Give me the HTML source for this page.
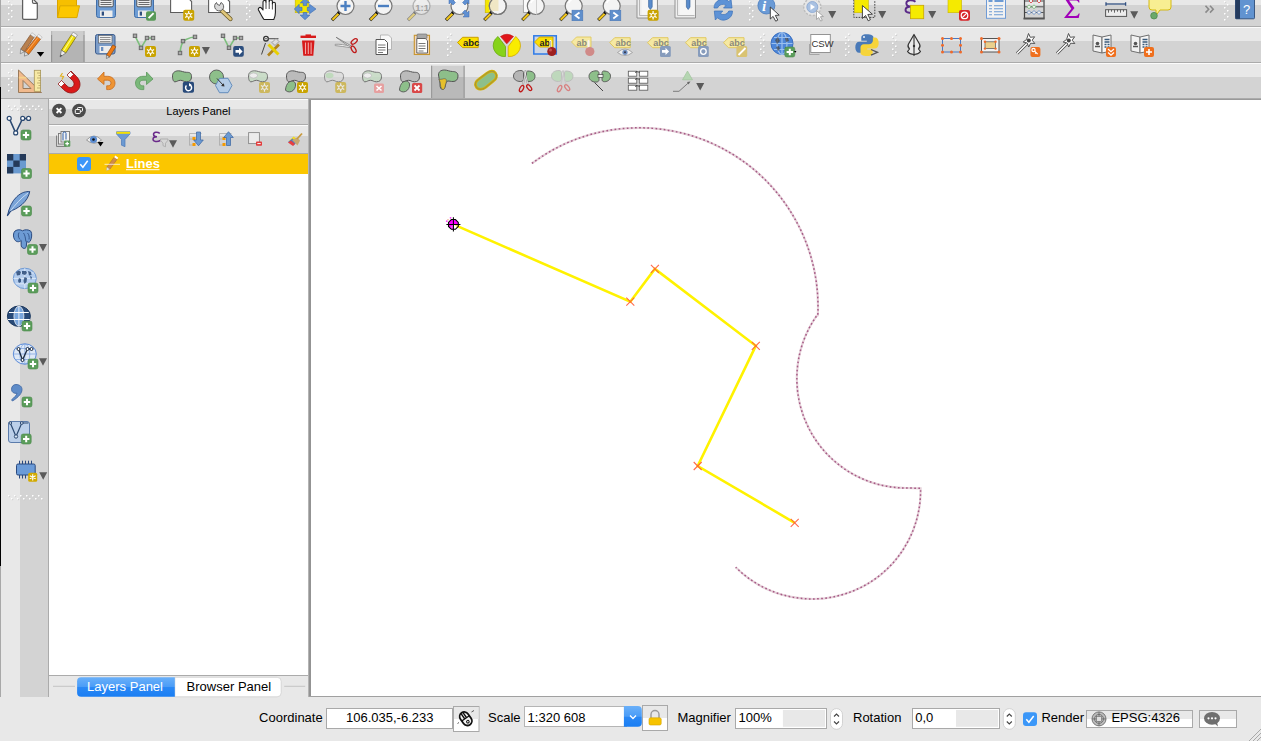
<!DOCTYPE html>
<html><head><meta charset="utf-8">
<style>
*{margin:0;padding:0;box-sizing:border-box}
html,body{width:1261px;height:741px;overflow:hidden;background:#e8e8e8;font-family:"Liberation Sans",sans-serif;position:relative}
.a{position:absolute}
svg{position:absolute;overflow:visible}
.t{position:absolute;white-space:nowrap;color:#000}
</style></head><body>
<!-- toolbar backgrounds -->
<div class="a" style="left:0;top:0;width:1261px;height:5px;background:#e8e8e8"></div>
<div class="a" style="left:0;top:5px;width:1261px;height:21px;background:#d3d3d3"></div>
<div class="a" style="left:0;top:26px;width:1261px;height:1px;background:#ababab"></div>
<div class="a" style="left:0;top:27px;width:1261px;height:1px;background:#fbfbfb"></div>
<div class="a" style="left:0;top:28px;width:1261px;height:13px;background:#e8e8e8"></div>
<div class="a" style="left:0;top:41px;width:1261px;height:21px;background:#d3d3d3"></div>
<div class="a" style="left:0;top:62px;width:1261px;height:1px;background:#ababab"></div>
<div class="a" style="left:0;top:63px;width:1261px;height:1px;background:#fbfbfb"></div>
<div class="a" style="left:0;top:64px;width:1261px;height:13px;background:#e8e8e8"></div>
<div class="a" style="left:0;top:77px;width:1261px;height:21px;background:#d3d3d3"></div>
<div class="a" style="left:0;top:98px;width:1261px;height:1px;background:#ababab"></div>
<!-- left vertical toolbar -->
<div class="a" style="left:1px;top:99px;width:19px;height:598px;background:#e8e8e8"></div>
<div class="a" style="left:20px;top:99px;width:28px;height:598px;background:#d3d3d3"></div>
<div class="a" style="left:48px;top:99px;width:1px;height:598px;background:#ababab"></div>
<div class="a" style="left:0;top:0;width:1px;height:741px;background:#a8a8a8"></div>
<div class="a" style="left:0;top:87px;width:1px;height:479px;background:#000"></div>
<!-- layers panel -->
<div class="a" style="left:49px;top:99px;width:259px;height:1px;background:#fbfbfb"></div>
<div class="a" style="left:49px;top:100px;width:259px;height:9px;background:#e8e8e8"></div>
<div class="a" style="left:49px;top:109px;width:259px;height:15px;background:#d3d3d3"></div>
<div class="a" style="left:49px;top:124px;width:259px;height:1px;background:#ababab"></div>
<div class="a" style="left:49px;top:125px;width:259px;height:1px;background:#fbfbfb"></div>
<div class="a" style="left:49px;top:126px;width:259px;height:10px;background:#e8e8e8"></div>
<div class="a" style="left:49px;top:136px;width:259px;height:17px;background:#d3d3d3"></div>
<div class="a" style="left:49px;top:153px;width:259px;height:1px;background:#ababab"></div>
<div class="a" style="left:49px;top:154px;width:259px;height:521px;background:#fff"></div>
<div class="a" style="left:49px;top:154px;width:259px;height:20px;background:#fbc600"></div>
<div class="a" style="left:49px;top:675px;width:259px;height:1px;background:#ababab"></div>
<div class="a" style="left:308px;top:99px;width:1px;height:598px;background:#b4b4b4"></div><div class="a" style="left:309px;top:99px;width:2px;height:598px;background:#939393"></div>
<!-- map canvas -->
<div class="a" style="left:311px;top:100px;width:950px;height:597px;background:#fff"></div>
<div class="a" style="left:309px;top:99px;width:952px;height:1px;background:#999"></div>
<!-- status bar -->
<div class="a" style="left:0;top:697px;width:1261px;height:44px;background:#e8e8e8"></div>
<div class="a" style="left:309px;top:696px;width:952px;height:1px;background:#a0a0a0"></div>
<!--TEXT-->
<svg style="left:0;top:0" width="1261" height="741" viewBox="0 0 1261 741">
<defs><g id="by"><rect x="0" y="0" width="11" height="11" rx="2" fill="#c9a300"/><path d="M5.5 1.3v8.4M1.9 3.4l7.2 4.2M1.9 7.6l7.2-4.2" stroke="#fff" stroke-width="1.2"/><circle cx="5.5" cy="5.5" r="2" fill="#d4ae20" stroke="#fff" stroke-width="1"/><circle cx="5.5" cy="5.5" r="0.7" fill="#b89000"/></g>
<g id="byf" opacity="0.55"><use href="#by"/></g>
<g id="bg"><rect x="0" y="0" width="10" height="10" rx="2" fill="#5b9d5b" stroke="#4a8a4a" stroke-width="0.6"/><path d="M5 1.8v6.4M1.8 5h6.4" stroke="#fff" stroke-width="2"/></g>
<g id="bx"><rect x="0" y="0" width="10" height="11" rx="2" fill="#d9474a"/><path d="M2.5 3l5 5M7.5 3l-5 5" stroke="#fff" stroke-width="1.8"/></g>
<path id="dd" d="M0 0h8l-4 7.5z" fill="#5a5a5a"/>
<g id="hv"><g fill="#bdbdbd"><rect x="4.5" y="1" width="1.6" height="1.6"/><rect x="1.5" y="4" width="1.6" height="1.6"/><rect x="4.5" y="7" width="1.6" height="1.6"/><rect x="1.5" y="10" width="1.6" height="1.6"/><rect x="4.5" y="13" width="1.6" height="1.6"/><rect x="1.5" y="16" width="1.6" height="1.6"/><rect x="4.5" y="19" width="1.6" height="1.6"/><rect x="1.5" y="22" width="1.6" height="1.6"/></g><g fill="#fff"><rect x="4" y="0.5" width="1.6" height="1.6"/><rect x="1" y="3.5" width="1.6" height="1.6"/><rect x="4" y="6.5" width="1.6" height="1.6"/><rect x="1" y="9.5" width="1.6" height="1.6"/><rect x="4" y="12.5" width="1.6" height="1.6"/><rect x="1" y="15.5" width="1.6" height="1.6"/><rect x="4" y="18.5" width="1.6" height="1.6"/><rect x="1" y="21.5" width="1.6" height="1.6"/></g></g>
<g id="hh"><g fill="#bdbdbd"><rect x="1" y="1.5" width="1.6" height="1.6"/><rect x="4" y="4.5" width="1.6" height="1.6"/><rect x="7" y="1.5" width="1.6" height="1.6"/><rect x="10" y="4.5" width="1.6" height="1.6"/><rect x="13" y="1.5" width="1.6" height="1.6"/><rect x="16" y="4.5" width="1.6" height="1.6"/><rect x="19" y="1.5" width="1.6" height="1.6"/><rect x="22" y="4.5" width="1.6" height="1.6"/><rect x="25" y="1.5" width="1.6" height="1.6"/><rect x="28" y="4.5" width="1.6" height="1.6"/><rect x="31" y="1.5" width="1.6" height="1.6"/><rect x="34" y="4.5" width="1.6" height="1.6"/></g><g fill="#fff"><rect x="0.5" y="1" width="1.6" height="1.6"/><rect x="3.5" y="4" width="1.6" height="1.6"/><rect x="6.5" y="1" width="1.6" height="1.6"/><rect x="9.5" y="4" width="1.6" height="1.6"/><rect x="12.5" y="1" width="1.6" height="1.6"/><rect x="15.5" y="4" width="1.6" height="1.6"/><rect x="18.5" y="1" width="1.6" height="1.6"/><rect x="21.5" y="4" width="1.6" height="1.6"/><rect x="24.5" y="1" width="1.6" height="1.6"/><rect x="27.5" y="4" width="1.6" height="1.6"/><rect x="30.5" y="1" width="1.6" height="1.6"/><rect x="33.5" y="4" width="1.6" height="1.6"/></g></g>
<g id="nd"><rect x="-1.7" y="-1.7" width="3.4" height="3.4" fill="#a9a9a9" stroke="#6a6a6a" stroke-width="1"/></g>
<g id="mag"><path d="M-13.5 14.2L-6.5 7.2" stroke="#222" stroke-width="3.3" stroke-linecap="butt"/><path d="M-13 13.7L-7 7.7" stroke="#f0c419" stroke-width="2.3"/><circle cx="-6.3" cy="6.3" r="1.7" fill="#111"/><circle cx="0" cy="0" r="8.5" fill="#f4f4f4" stroke="#777" stroke-width="1.2"/><path d="M-5 -3a6 6 0 0 1 6-4" stroke="#fff" stroke-width="1.5" fill="none"/></g>
<g id="tag"><path d="M0.5 5.5l5-5h15.5v10h-15.5z" fill="#fbe54a" stroke="#d5ad00" stroke-width="1"/><text x="6.5" y="9.3" font-family="Liberation Sans" font-weight="bold" font-size="9" fill="#333">abc</text></g>
<g id="book"><path d="M0.5 1.5l9 2v16l-9-2z" fill="#f2f2f2" stroke="#6f6f6f" stroke-width="1"/><path d="M9.5 3.5l9-2v16l-9 2z" fill="#f7f7f7" stroke="#6f6f6f" stroke-width="1"/><path d="M12 6h5M12 8.5h5M12 11h2M15 11h2M12 13.5h2M15 13.5h2" stroke="#3a5a7a" stroke-width="1.3"/><circle cx="5" cy="10" r="1.8" fill="#555"/><path d="M2.5 13h5" stroke="#555" stroke-width="1.5"/></g>

<g id="bo"><rect x="0" y="0" width="10" height="10" rx="2" fill="#ef6f1d"/></g>
<g id="blob"><path d="M1 5.5c0-3.5 3-5 6-5 3 0 5 1.5 8 1.5 3 0 5 .5 5 4.5 0 3.5-2 5-5 5-3 0-3.5-1.5-6-1.5-2.5 0-3.5 1.5-5.5 1.5-1.5 0-2.5-2-2.5-6z" stroke="#555" stroke-width="1"/></g>
<g id="tagf"><path d="M0.5 5.5l5-5h15.5v10h-15.5z" fill="#f6e9a2" stroke="#e0c860" stroke-width="1"/><text x="6.3" y="9.3" font-family="Liberation Sans" font-weight="bold" font-size="9" fill="#8a8a7a">abc</text></g>
</defs>
<clipPath id="c1"><rect x="0" y="0" width="1261" height="26"/></clipPath>
<g clip-path="url(#c1)">
<use href="#hv" x="7" y="-2.5"/><use href="#hv" x="245" y="-2.5"/><use href="#hv" x="748" y="-2.5"/><use href="#hv" x="1223" y="-2.5"/>
<!-- new -->
<path d="M22.6 -4V18a1.3 1.3 0 0 0 1.3 1.3H36a1.3 1.3 0 0 0 1.3-1.3V3.3L32.5 -1.5V-4Z" fill="#fff" stroke="#5e5e5e" stroke-width="1.25"/>
<path d="M32.5 -1.5V2a1.3 1.3 0 0 0 1.3 1.3H37.3" fill="none" stroke="#5e5e5e" stroke-width="1.2"/>
<!-- open -->
<path d="M57.5 -2.5h6l1.5 2h11.5v17.8h-19z" fill="#f6bf00" stroke="#dba400" stroke-width="1"/>
<path d="M60 5.8h19.5l-2.6 11.8h-19.3z" fill="#fcc700" stroke="#dba800" stroke-width="1"/>
<!-- save -->
<g id="flop"><rect x="96.5" y="-4" width="19" height="21.5" rx="2" fill="#6d9cd4" stroke="#416fa9" stroke-width="1"/>
<rect x="98.8" y="-4" width="14.4" height="10.8" rx="1.2" fill="#efefef" stroke="#4a4a4a" stroke-width="0.9"/>
<path d="M100.5 0.5h11M100.5 2.5h11M100.5 4.5h11" stroke="#4a4a4a" stroke-width="0.8"/>
<rect x="100" y="10.5" width="12.5" height="6.5" fill="#ececec"/>
<rect x="101.7" y="11.6" width="2.3" height="4" fill="#2e4e7e"/></g>
<use href="#flop" x="38" y="0"/>
<rect x="146" y="11.2" width="10" height="9.5" rx="2" fill="#589a58"/><path d="M148.6 18.2l5-5" stroke="#fff" stroke-width="1.8"/>
<!-- print composer -->
<path d="M170.6 -4h15.5l5.5 5.5v11h-21z" fill="#fff" stroke="#5c5c5c" stroke-width="1.1"/>
<use href="#by" x="183.2" y="9.8"/>
<!-- composer manager -->
<path d="M208.6 -4h15.5l5.5 5.5v11h-21z" fill="#fff" stroke="#5c5c5c" stroke-width="1.1"/>
<path d="M221.5 10.5l9 8.5" stroke="#6b5a2a" stroke-width="4.2" stroke-linecap="round"/><path d="M221.5 10.5l9 8.5" stroke="#e0c77a" stroke-width="2.6" stroke-linecap="round"/>
<path d="M216.5 2.5a4.5 4.5 0 0 0 5.5 7.5l1-1a4.5 4.5 0 0 0-2-6.5l-1.5 3-2.5-1.5z" fill="#d8d8d8" stroke="#555" stroke-width="0.9"/>
<!-- pan -->
<path d="M264 19.5C262 17 259.8 12.5 258.5 10C257.8 8.3 259.6 6.6 261.2 7.8L263 10V2a1.5 1.5 0 0 1 3 0V0.5a1.6 1.6 0 0 1 3.2 0V1.5a1.6 1.6 0 0 1 3.2 0V3.8a1.5 1.5 0 0 1 3 0V12.5C275.4 15.5 274.8 17.5 273.8 19.5Z" fill="#fff" stroke="#1e1e1e" stroke-width="1.1" stroke-linejoin="round"/>
<path d="M266 2v7M269.2 1.5v7.5M272.4 3.5v6" stroke="#1e1e1e" stroke-width="0.8"/>
<!-- pan to selection -->
<rect x="295.2" y="-2" width="13.3" height="14.7" fill="#f3e600" stroke="#c6b200" stroke-width="0.6"/>
<g fill="#5f90d2" stroke="#3d6bb0" stroke-width="0.6" stroke-linejoin="round">
<path d="M294.3 9L299.2 4.3V7.3H302V10.8H299.2V13.7Z"/><path d="M316 9L309.6 4.3V7.3H307.3V10.8H309.6V13.7Z"/><path d="M305 -1.6L300.3 2.9H303.2V5.6H306.8V2.9H309.7Z"/><path d="M305 19.7L300.1 15.1H303.2V12.5H306.8V15.1H309.9Z"/>
</g>
<!-- zoom in/out/1:1/full -->
<use href="#mag" x="345.5" y="6"/><path d="M340.5 6h10M345.5 1v10" stroke="#4b7fc1" stroke-width="2.4"/>
<use href="#mag" x="383.5" y="6"/><path d="M378 6h11" stroke="#4b7fc1" stroke-width="2.4"/>
<g opacity="0.45"><use href="#mag" x="421.5" y="6"/></g><text x="415.2" y="10.5" font-family="Liberation Sans" font-weight="bold" font-size="9.5" fill="#a0a0a0">1:1</text>
<use href="#mag" x="459.5" y="6"/>
<g fill="#5f90d2" stroke="#3d6bb0" stroke-width="0.5"><path d="M449 -2l6 0-2 2 2.5 2.5-2.5 2.5-2.5-2.5-1.5 1.5z"/><path d="M469 -2h-6l2 2-2.5 2.5 2.5 2.5 2.5-2.5 1.5 1.5z"/><path d="M469 17h-6l2-2-2.5-2.5 2.5-2.5 2.5 2.5 1.5-1.5z"/></g>
<!-- zoom to layer -->
<rect x="485.2" y="-2" width="6" height="14.7" fill="#f5e600" stroke="#c8b400" stroke-width="0.6"/>
<use href="#mag" x="497.8" y="6"/><path d="M489.3 -2v15.5" stroke="#fff0" /><rect x="489.5" y="-2" width="9" height="13" fill="#efe6c0" opacity="0.9"/><circle cx="497.8" cy="6" r="8.5" fill="none" stroke="#777" stroke-width="1.2"/>
<!-- zoom to selection -->
<rect x="523.3" y="-3" width="11" height="15.5" fill="#fafafa" stroke="#888" stroke-width="0.7"/>
<use href="#mag" x="535.8" y="6"/><path d="M536.5 -2.5v17" stroke="#d0d0d0" stroke-width="1"/>
<!-- zoom last/next -->
<use href="#mag" x="573.7" y="6"/><rect x="572" y="10.2" width="10.8" height="10.5" fill="#5f8fcc" stroke="#4a78b8" stroke-width="0.6"/><path d="M579.5 12.5l-4 3 4 3" stroke="#fff" stroke-width="1.8" fill="none"/>
<use href="#mag" x="611.7" y="6"/><rect x="610" y="10.2" width="10.8" height="10.5" fill="#5f8fcc" stroke="#4a78b8" stroke-width="0.6"/><path d="M613.3 12.5l4 3-4 3" stroke="#fff" stroke-width="1.8" fill="none"/>
<!-- bookmarks -->
<path d="M637 -3h20.5v21h-20.5z" fill="#ededed" stroke="#8a8a8a" stroke-width="0.9"/><path d="M639.5 -3v18.5h17" fill="none" stroke="#b8b8b8" stroke-width="1"/><rect x="641.5" y="-3" width="15" height="18" fill="#f6f6f6"/>
<path d="M648.6 -3h3.6v10l-1.8 2.5-1.8-2.5z" fill="#5a8ccc" stroke="#2e5a94" stroke-width="0.6"/>
<use href="#by" x="647.6" y="9.8"/>
<path d="M675 -3h20.5v21h-20.5z" fill="#ededed" stroke="#8a8a8a" stroke-width="0.9"/><path d="M677.5 -3v18.5h17" fill="none" stroke="#b8b8b8" stroke-width="1"/><rect x="679.5" y="-3" width="15" height="18" fill="#f6f6f6"/>
<path d="M686.4 -3h3.6v10l-1.8 2.5-1.8-2.5z" fill="#5a8ccc" stroke="#2e5a94" stroke-width="0.6"/>
<!-- refresh -->
<path d="M714 8a9 9 0 0 1 15-6.5l2-2.5 1 9h-8.5l2.5-2.5a5.5 5.5 0 0 0-8.5 2.5z" fill="#5d92d6" stroke="#3a70b8" stroke-width="0.7"/>
<path d="M732.5 11a9 9 0 0 1-15 6.8l-2.2 2.2-1-9h8.5l-2.5 2.5a5.5 5.5 0 0 0 8.5-2.5z" fill="#5d92d6" stroke="#3a70b8" stroke-width="0.7"/>
<!-- identify -->
<circle cx="766.4" cy="5.5" r="8.5" fill="#6b9bd6" stroke="#4a7cbf" stroke-width="0.8"/><text x="762" y="11" font-family="Liberation Serif" font-style="italic" font-weight="bold" font-size="15" fill="#fff">i</text>
<path d="M770.3 7v12l2.8-2.6 2.6 4.8 2.1-1.1-2.5-4.7 3.9-.3z" fill="#fff" stroke="#333" stroke-width="0.9" stroke-linejoin="round"/>
<!-- action -->
<circle cx="812.3" cy="7" r="8.6" fill="#e6e6e6" stroke="#bdbdbd" stroke-width="1.5" stroke-dasharray="2.2 1.4"/>
<circle cx="812.3" cy="7" r="5.5" fill="#a9c1e2" stroke="#86a5d0" stroke-width="0.8"/><path d="M810.5 4v6l4.5-3z" fill="#fff"/>
<path d="M816.5 10.5v9l2.2-2 2 3.6 1.6-.8-1.9-3.6 3-.2z" fill="#fff" stroke="#999" stroke-width="0.8" stroke-linejoin="round"/>
<use href="#dd" x="828.2" y="11"/>
<!-- select -->
<rect x="853.8" y="-3" width="21" height="20.4" fill="none" stroke="#333" stroke-width="0.9" stroke-dasharray="1.6 1.2"/>
<rect x="854.5" y="-3" width="13.8" height="15.7" fill="#f5ea00" stroke="#c9b500" stroke-width="0.6"/>
<path d="M862.4 5.5v13l3.2-3 2.6 5.3 2.2-1.1-2.6-5.2 4.6-.3z" fill="#fff" stroke="#333" stroke-width="0.9" stroke-linejoin="round"/>
<use href="#dd" x="878.2" y="11"/>
<!-- select by expression -->
<path d="M915.5 1.8C912.5 -0.6 906.3 -0.3 906.3 3.2C906.3 5.3 908.5 6.5 911.5 6.5C907.5 6.5 905.5 8 905.5 10C905.5 13.2 912 13.6 916.2 11.2" fill="none" stroke="#5a2a88" stroke-width="1.9"/>
<rect x="910.5" y="5.3" width="13.2" height="13.4" fill="#f5ea00" stroke="#c9a700" stroke-width="0.8"/>
<use href="#dd" x="928.2" y="11"/>
<!-- deselect -->
<rect x="948" y="-3" width="13.6" height="15.7" fill="#f5ea00" stroke="#c9b500" stroke-width="0.6"/>
<rect x="959" y="10" width="11" height="10.8" rx="2" fill="#d7262a"/><circle cx="964.5" cy="15.4" r="3.3" fill="none" stroke="#fff" stroke-width="1.2"/><path d="M962.2 17.7l4.6-4.6" stroke="#fff" stroke-width="1.2"/>
<!-- attribute table -->
<rect x="986.5" y="-3" width="19" height="21.3" fill="#f2f2f2" stroke="#6f9bd6" stroke-width="1"/>
<path d="M988.5 1h4M994.5 1h9" stroke="#6b9ad4" stroke-width="1.8"/>
<path d="M989 5.8h3M994 5.8h9M989 8.8h3M994 8.8h9M989 11.8h3M994 11.8h9M989 14.8h3M994 14.8h9" stroke="#6b9ad4" stroke-width="1.1"/>
<!-- abacus -->
<path d="M1024.5 -3v21M1044 -3v21" stroke="#444" stroke-width="1.2"/><rect x="1023.4" y="17.6" width="21.4" height="2" rx=".6" fill="#555"/>
<path d="M1025 1h18.5M1025 6.8h18.5M1025 12.5h18.5" stroke="#444" stroke-width="0.9"/>
<g stroke-width="0.8"><path d="M1031 -1l2 2-2 2-2-2zM1039 -1l2 2-2 2-2-2z" fill="#f0f0f0" stroke="#d43a3a"/><path d="M1029 4.8l2 2-2 2-2-2zM1034 4.8l2 2-2 2-2-2z" fill="#f0f0f0" stroke="#6bb86b"/><path d="M1029 10.5l2 2-2 2-2-2zM1034 10.5l2 2-2 2-2-2zM1039 10.5l2 2-2 2-2-2z" fill="#f0f0f0" stroke="#5a84c0"/></g>
<!-- sigma -->
<path d="M1065 -1h14l.5 3.5h-1c-.5-1.5-1.5-2-3-2h-6.5l5.5 7.5-6.5 8h7.5c1.5 0 2.5-.8 3.2-2.5h1l-1 4.5h-14.7l7.3-9.3z" fill="#a000b8"/>
<!-- measure -->
<path d="M1106 4h19.6" stroke="#314f80" stroke-width="1.3"/><path d="M1106 2.3v3.4M1125.6 2.3v3.4" stroke="#314f80" stroke-width="1.3"/>
<rect x="1105.6" y="9.7" width="21" height="6.7" fill="#ececec" stroke="#555" stroke-width="1"/>
<path d="M1108.5 9.7v3M1111.5 9.7v2M1114.5 9.7v3M1117.5 9.7v2M1120.5 9.7v3M1123.5 9.7v2" stroke="#555" stroke-width="0.9"/>
<use href="#dd" x="1130.2" y="11.2"/>
<!-- annotation -->
<path d="M1152 -3h16a3 3 0 0 1 3 3v7a3 3 0 0 1-3 3h-8l-4 5.5v-5.5h-4a3 3 0 0 1-3-3v-7a3 3 0 0 1 3-3z" fill="#f8ee92" stroke="#d2b400" stroke-width="0.9"/>
<circle cx="1154" cy="15.7" r="3.3" fill="#6aa86a" stroke="#4e8a4e" stroke-width="0.8"/>
<!-- chevrons -->
<path d="M1205.5 5.8l3.2 3.4-3.2 3.4M1210 5.8l3.2 3.4-3.2 3.4" stroke="#8a8a8a" stroke-width="1.6" fill="none"/>
<!-- help -->
<rect x="1235.5" y="-3" width="19" height="21.8" rx="1" fill="#6193d0" stroke="#2e4d78" stroke-width="0.9"/><rect x="1235.5" y="-3" width="4.5" height="21.8" fill="#243b5e"/>
<text x="1243" y="14" font-family="Liberation Sans" font-size="13" fill="#fff">?</text>
</g>

<clipPath id="c2"><rect x="0" y="28" width="1261" height="34"/></clipPath>
<g clip-path="url(#c2)">
<use href="#hv" x="7" y="33"/><use href="#hv" x="446" y="33"/><use href="#hv" x="759" y="33"/><use href="#hv" x="844" y="33"/><use href="#hv" x="891" y="33"/>
<!-- pencils -->
<g transform="translate(22.5,50.5) rotate(-56)"><rect x="0" y="-2.2" width="17.5" height="4.4" fill="#b8804e" stroke="#7a5030" stroke-width="0.6"/><path d="M0 -2.2l-4 2.2 4 2.2z" fill="#ddd" stroke="#666" stroke-width="0.5"/><rect x="17.5" y="-2.2" width="2.5" height="4.4" fill="#eee" stroke="#999" stroke-width="0.4"/></g>
<g transform="translate(26.8,53) rotate(-52)"><rect x="0" y="-2.3" width="19.5" height="4.6" fill="#ea7a16" stroke="#9a4a10" stroke-width="0.6"/><path d="M0.5 -0.8h19" stroke="#f8b070" stroke-width="0.8"/><path d="M0 -2.3l-4 2.3 4 2.3z" fill="#e6e6e6" stroke="#555" stroke-width="0.5"/><rect x="19.5" y="-2.3" width="2.5" height="4.6" fill="#f2f2f2" stroke="#999" stroke-width="0.4"/></g>
<path d="M36.8 52h7.4l-3.7 4.8z" fill="#000"/>
<!-- pressed button -->
<rect x="51" y="31" width="33.5" height="10" fill="#cdcdcd"/><rect x="51" y="41" width="33.5" height="21" fill="#b4b4b4"/>
<rect x="51" y="35" width="1.2" height="27" fill="#959595"/><rect x="83.4" y="35" width="1.2" height="27" fill="#959595"/><rect x="51" y="31" width="1.2" height="4" fill="#b8b8b8"/><rect x="83.4" y="31" width="1.2" height="4" fill="#b8b8b8"/>
<g transform="translate(63.6,51.6) rotate(-57)"><rect x="0" y="-2.6" width="18.5" height="5.2" fill="#f1e10a" stroke="#8a7a10" stroke-width="0.8"/><path d="M0.5 -0.5h18" stroke="#fffa90" stroke-width="1"/><path d="M0 -2.6l-6.5 2.6 6.5 2.6z" fill="#ececec" stroke="#666" stroke-width="0.6"/><path d="M-6.5 0l2.5-1v2z" fill="#444"/><rect x="18.5" y="-2.6" width="3" height="5.2" fill="#f5f5f5" stroke="#888" stroke-width="0.6"/></g>
<!-- save edits -->
<rect x="95.5" y="34.5" width="19.5" height="19.5" rx="2" fill="#7b9cc8" stroke="#3f5f8f" stroke-width="1"/>
<rect x="98.5" y="35.5" width="13.5" height="7.5" fill="#f0f0f0" stroke="#555" stroke-width="0.6"/><path d="M100 37.5h10.5M100 39.5h10.5M100 41.5h10.5" stroke="#666" stroke-width="0.7"/>
<rect x="99.5" y="46" width="11.5" height="7" fill="#ededed"/><rect x="101" y="47" width="2.3" height="4" fill="#6a8ec0"/>
<g transform="translate(108,56) rotate(-58)"><rect x="0" y="-1.8" width="12" height="3.6" fill="#ee7a14" stroke="#8a4a10" stroke-width="0.6"/><path d="M0 -1.8l-3 1.8 3 1.8z" fill="#ddd" stroke="#555" stroke-width="0.5"/></g>
<!-- add feature -->
<path d="M135 35.8L141 47.9L147 38L153 38" stroke="#7dbf7d" stroke-width="1.6" fill="none"/>
<use href="#nd" x="135" y="35.8"/><use href="#nd" x="147" y="38"/><use href="#nd" x="153" y="38"/><use href="#nd" x="141" y="47.9"/>
<use href="#by" x="145" y="46"/>
<!-- circular string -->
<path d="M180 53C180.5 46 182 41.5 186 39.5S192 37 195 37" stroke="#7dbf7d" stroke-width="1.6" fill="none"/>
<use href="#nd" x="180" y="53"/><use href="#nd" x="183" y="41.1"/><use href="#nd" x="195" y="36.9"/>
<use href="#by" x="189" y="46"/><use href="#dd" x="201.9" y="47"/>
<!-- move feature -->
<path d="M223 35.8L229 47.8L235 38L241 38" stroke="#7dbf7d" stroke-width="1.6" fill="none"/>
<use href="#nd" x="223" y="35.8"/><use href="#nd" x="235" y="38"/><use href="#nd" x="241" y="38"/><use href="#nd" x="229" y="47.8"/>
<rect x="233.2" y="46" width="10.6" height="10.8" rx="2" fill="#2c4e7e"/><path d="M235.5 50h3.5v-2.2l3.6 3.6-3.6 3.6v-2.2h-3.5z" fill="#fff"/>
<!-- node tool -->
<circle cx="266" cy="38.7" r="2.3" fill="#fff" stroke="#333" stroke-width="1.4"/><circle cx="266" cy="38.7" r="0.8" fill="#333"/>
<path d="M268.5 38.7h10" stroke="#555" stroke-width="1.1"/><path d="M265.5 43l-4 11.5" stroke="#333" stroke-width="0.9"/>
<path d="M268 55.5l11-11" stroke="#b0841a" stroke-width="2.6"/><path d="M268.5 44.5l10 10" stroke="#e8d000" stroke-width="3"/><path d="M272 42.5l4-4 3 3-4 4z" fill="#ddd" stroke="#777" stroke-width="0.6"/>
<!-- delete -->
<path d="M300.5 36.8h15.5" stroke="#d71a1a" stroke-width="2.4"/><path d="M305.5 35.2h5.5" stroke="#d71a1a" stroke-width="1.6"/>
<path d="M302 40.5h12.5l-1.2 15.3h-10z" fill="#d71a1a"/><path d="M305.5 42.5v11.5M308.3 42.5v11.5M311.1 42.5v11.5" stroke="#f2a8a8" stroke-width="1.1"/>
<!-- cut -->
<path d="M336 37.2L351.8 46.2L350.6 47.6Z" fill="#f4f4f4" stroke="#7a7a7a" stroke-width="0.8" stroke-linejoin="round"/>
<path d="M335.2 44.3C340 44 345 44.8 350 46.3L349.5 47.6C344.5 46.8 340 46 335.2 45.6Z" fill="#f4f4f4" stroke="#8a8a8a" stroke-width="0.8" stroke-linejoin="round"/>
<ellipse cx="354.2" cy="41.4" rx="3.6" ry="1.9" fill="none" stroke="#bf1a1a" stroke-width="1.3" transform="rotate(-38 354.2 41.4)"/>
<ellipse cx="353.6" cy="49.3" rx="3.6" ry="1.9" fill="none" stroke="#bf1a1a" stroke-width="1.3" transform="rotate(58 353.6 49.3)"/>
<!-- copy -->
<path d="M380.5 35h8l3 3v11.5h-11z" fill="#f8f8f8" stroke="#aaa" stroke-width="0.8"/>
<path d="M376 39.5h8.5l3 3v12h-11.5z" fill="#fff" stroke="#555" stroke-width="1"/><path d="M378 45h7.5M378 47.5h7.5M378 50h7.5M378 52.5h5" stroke="#555" stroke-width="0.8"/>
<!-- paste -->
<rect x="414.3" y="35.3" width="15.2" height="19.2" fill="#f1d7bc" stroke="#c8962e" stroke-width="1.1"/>
<rect x="417" y="34" width="10" height="4.5" rx="1" fill="#a8a8a8" stroke="#666" stroke-width="0.6"/>
<path d="M416.8 38.5h8.5l2.2 2.2v12.3h-10.7z" fill="#fff" stroke="#555" stroke-width="0.9"/><path d="M418.5 43.5h7M418.5 46h7M418.5 48.5h7M418.5 51h5" stroke="#555" stroke-width="0.8"/>
<!-- label -->
<path d="M457.5 42.5l5-5.2h15.7v10.3h-15.7z" fill="#fbe000" stroke="#cba000" stroke-width="1"/><text x="463" y="46.4" font-family="Liberation Sans" font-weight="bold" font-size="9.5" fill="#222">abc</text>
<!-- diagram -->
<path d="M506.8 43.8L500.5 36.5A11.5 11.5 0 0 1 513.5 36.5z" fill="#e0161a" stroke="#c01010" stroke-width="0.6"/>
<path d="M505.5 46.5V56.5A11 11 0 0 1 498 36.5z" fill="#86d31a" stroke="#6aa810" stroke-width="0.8"/>
<path d="M508.2 46.5V56.5A11 11 0 0 0 515.7 36.5z" fill="#f9ec00" stroke="#d2a800" stroke-width="0.8"/>
<!-- pin labels -->
<rect x="533.8" y="35.8" width="22.5" height="18.2" fill="#cdd6e4" stroke="#2f7be8" stroke-width="1.5"/>
<path d="M534.5 42l5-5h13.5v10h-13.5z" fill="#fbe000" stroke="#cba000" stroke-width="0.9"/><text x="539.5" y="45.7" font-family="Liberation Sans" font-weight="bold" font-size="9" fill="#222">ab</text>
<path d="M550.5 41v7" stroke="#fff" stroke-width="2" stroke-linecap="round"/><path d="M550.5 41v7" stroke="#777" stroke-width="0.5"/>
<circle cx="551.8" cy="51.5" r="4.6" fill="#9e2020"/><circle cx="550.5" cy="50" r="1.5" fill="#c85050"/>
<!-- show pinned (faded) -->
<path d="M571.5 42l5-5h14.5v10h-14.5z" fill="#f6e9a2" stroke="#e0c860" stroke-width="0.9"/><text x="576.5" y="45.7" font-family="Liberation Sans" font-weight="bold" font-size="9" fill="#8a8a7a">ab</text>
<path d="M588.5 41v7" stroke="#f4f4f4" stroke-width="2" stroke-linecap="round"/>
<circle cx="589.8" cy="51.5" r="4.6" fill="#d08a88"/>
<!-- show/hide labels -->
<use href="#tagf" x="609.2" y="37.2"/>
<path d="M617.5 52.5q7.5-7 15 0q-7.5 6-15 0z" fill="#f0f0f0" stroke="#999" stroke-width="0.8"/><circle cx="625" cy="52.3" r="2.6" fill="#6f8fc0"/><circle cx="625" cy="52.3" r="1" fill="#334"/>
<!-- move / rotate / change label -->
<use href="#tagf" x="647" y="37.2"/><rect x="660" y="46" width="10.8" height="11" rx="1.5" fill="#879cbc"/><path d="M662 50h3.5v-2.2l3.6 3.6-3.6 3.6v-2.2h-3.5z" fill="#fff"/>
<use href="#tagf" x="685" y="37.2"/><rect x="698" y="46" width="10.8" height="11" rx="1.5" fill="#879cbc"/><circle cx="703.4" cy="51.5" r="2.8" fill="none" stroke="#fff" stroke-width="1.3"/>
<use href="#tagf" x="723" y="37.2"/><rect x="736.4" y="46" width="10.8" height="11" rx="1.5" fill="#d9c372"/><path d="M738.5 55l7-7" stroke="#fff" stroke-width="1.8"/>
<!-- WMS globe -->
<circle cx="782" cy="43.5" r="11" fill="#4d86d8" stroke="#3a6fc0" stroke-width="1"/>
<path d="M771.5 43.5h21M774 37.5h16M774 49.5h16M782 32.5v22" stroke="#9cc0ee" stroke-width="1.2"/>
<ellipse cx="782" cy="43.5" rx="5" ry="11" fill="none" stroke="#9cc0ee" stroke-width="1.2"/>
<path d="M775 40l3-3 2 4-3 3zM785 38l3 0 1 3-3 1zM776 47l3-1 1 3-2 2zM785 47l3 1-1 3-2 0z" fill="#444" opacity="0.7"/>
<use href="#bg" x="784.8" y="47"/><path d="M794 51h2.5l-1.25 1.8z" fill="#000"/>
<!-- CSW -->
<path d="M809.5 44v10.5h10" fill="none" stroke="#999" stroke-width="0.8"/>
<rect x="810.8" y="34.5" width="19.5" height="18" fill="#fff" stroke="#8a8a8a" stroke-width="0.9"/>
<text x="811.6" y="47.3" font-family="Liberation Sans" font-size="9.6" fill="#333" letter-spacing="-0.2">CSW</text>
<!-- python -->
<path d="M866.5 34.2c-4.5 0-5.2 2-5.2 3.5v3h5.5v1h-7.5c-2.5 0-4 2-4 5.5s1.5 5.5 3.8 5.5h2v-3c0-2.2 2-3.8 4-3.8h5.2c1.8 0 3.2-1.5 3.2-3.2v-5c0-2-1.8-3.5-7-3.5z" fill="#4a7ab8"/>
<circle cx="864" cy="37" r="0.9" fill="#fff"/>
<path d="M867.5 56c4.5 0 5.2-2 5.2-3.5v-3h-5.5v-1h7.5c2.5 0 4-2 4-5.5s-1.5-5.5-3.8-5.5h-2v3c0 2.2-2 3.8-4 3.8h-5.2c-1.8 0-3.2 1.5-3.2 3.2v5c0 2 1.8 3.5 7 3.5z" fill="#f6d43a"/>
<path d="M871 49.5l6.5 2.8-6.5 2.8" stroke="#555" stroke-width="1.3" fill="none"/>
<!-- digitize nib -->
<path d="M914 34.5l-5.5 9.5c-1 1.8-.5 3.5 1 5l-2 2.5c1.5 2 3 3 6.5 3s5-1 6.5-3l-2-2.5c1.5-1.5 2-3.2 1-5z" fill="#eaeaea" stroke="#333" stroke-width="1.2" stroke-linejoin="round"/>
<path d="M914 36v20" stroke="#333" stroke-width="1.1"/><circle cx="914" cy="46" r="1.2" fill="#333"/>
<!-- rect tools -->
<rect x="942.5" y="38.5" width="18" height="13.5" fill="none" stroke="#4a78c0" stroke-width="1"/>
<g fill="#ef6a2a"><circle cx="942.5" cy="38.5" r="1.5"/><circle cx="951.5" cy="38.5" r="1.5"/><circle cx="960.5" cy="38.5" r="1.5"/><circle cx="942.5" cy="45.2" r="1.5"/><circle cx="960.5" cy="45.2" r="1.5"/><circle cx="942.5" cy="52" r="1.5"/><circle cx="951.5" cy="52" r="1.5"/><circle cx="960.5" cy="52" r="1.5"/></g>
<rect x="981.5" y="38.5" width="17.5" height="13.5" fill="#f2f2f2" stroke="#555" stroke-width="1"/>
<rect x="985" y="41.8" width="10.5" height="6.8" fill="#ecd08c" stroke="#555" stroke-width="0.7"/>
<g fill="#ef6a2a"><circle cx="981.5" cy="38.5" r="1.5"/><circle cx="999" cy="38.5" r="1.5"/><circle cx="981.5" cy="52" r="1.5"/><circle cx="999" cy="52" r="1.5"/><circle cx="985" cy="41.8" r="1.2"/><circle cx="995.5" cy="41.8" r="1.2"/><circle cx="985" cy="48.6" r="1.2"/><circle cx="995.5" cy="48.6" r="1.2"/></g>
<!-- magic wands -->
<g id="wand"><path d="M1017 53.5l10.5-10.5" stroke="#444" stroke-width="3"/><path d="M1017 53.5l10.5-10.5" stroke="#fff" stroke-width="1.6"/>
<path d="M1028.5 33.5l1.8 3.8 4.3-.5-2.4 3.4 2.6 3.3-4.2-.3-1.9 3.8-1.5-4-4-1 3.4-2.6z" fill="#fff" stroke="#444" stroke-width="0.9" stroke-linejoin="round"/><circle cx="1028.8" cy="40.5" r="2" fill="#444"/></g>
<use href="#bo" x="1030.4" y="47"/><circle cx="1033.5" cy="50" r="1.6" fill="none" stroke="#fff" stroke-width="1.2"/><path d="M1034.6 51.2l3 3M1036 52.7l-1 1" stroke="#fff" stroke-width="1.2"/>
<use href="#wand" x="40" y="0"/>
<!-- books -->
<use href="#book" x="1092.5" y="33.5"/><use href="#bo" x="1106" y="47"/><path d="M1108 49l3 2.8 3-2.8M1108 52.5l3 2.8 3-2.8" stroke="#fff" stroke-width="1.2" fill="none"/>
<use href="#book" x="1130.5" y="33.5"/><use href="#bo" x="1144" y="47"/><path d="M1149 49v6M1146 52h6" stroke="#fff" stroke-width="1.6"/>
</g>

<clipPath id="c3"><rect x="0" y="64" width="1261" height="34"/></clipPath>
<g clip-path="url(#c3)">
<use href="#hv" x="7" y="68.5"/>
<!-- triangle ruler -->
<path d="M18.5 70v22.5h23z" fill="#f1b98c" stroke="#9a7a5a" stroke-width="1"/>
<path d="M18.8 76.8h6.7l1.8 1.8h-8.5z" fill="#f6d68a" opacity="0.9"/>
<path d="M23 80.5v8h8z" fill="#d3d3d3" stroke="#9a7a5a" stroke-width="1"/>
<rect x="34.3" y="70.3" width="6.3" height="21" fill="#f7e9a4" stroke="#a8965a" stroke-width="0.8"/>
<path d="M37 73h3.5M38.5 75.5h2M37 78h3.5M38.5 80.5h2M37 83h3.5M38.5 85.5h2M37 88h3.5" stroke="#a08a50" stroke-width="0.6"/>
<!-- magnet -->
<path d="M61.5 80.5l5.5 5.5c2 2 4.5 2 6 .5s1.5-4-.5-6l-5.5-5.5 4-4 5.5 5.5c4.5 4.5 4.5 10.5 1 14s-9.5 3.5-14-1l-5.5-5.5z" fill="#d91a1a" stroke="#8a1010" stroke-width="0.8"/>
<path d="M58 84l3.5-3.5 3 3-3.5 3.5z" fill="#fff" stroke="#8a1010" stroke-width="0.6"/><path d="M67 75l3.5-3.5 3 3-3.5 3.5z" fill="#fff" stroke="#8a1010" stroke-width="0.6"/>
<path d="M62.5 73l-2 3 3 .5-1.5 3" stroke="#e0b020" stroke-width="1.2" fill="none"/>
<!-- undo -->
<path d="M97.5 79l6.5-7v4.3h3.5c4.5 0 7.5 3 7.5 6.8s-2.8 6.5-6.3 6.5h-2v-3.8h1.5c1.5 0 2.8-1.2 2.8-2.8s-1.5-2.8-3.5-2.8h-3.5v4.3z" fill="#ee9434" stroke="#c86a1a" stroke-width="0.8" stroke-linejoin="round"/>
<!-- redo -->
<path d="M153 79l-6.5-7v4.3h-3.5c-4.5 0-7.5 3-7.5 6.8s2.8 6.5 6.3 6.5h2v-3.8h-1.5c-1.5 0-2.8-1.2-2.8-2.8s1.5-2.8 3.5-2.8h3.5v4.3z" fill="#7ab87a" stroke="#5a985a" stroke-width="0.8" stroke-linejoin="round"/>
<!-- rotate feature -->
<use href="#blob" x="171.5" y="70.3" fill="#8dbf8a"/>
<rect x="182.8" y="81.8" width="11.2" height="11" rx="1.8" fill="#284a7a"/><path d="M186.5 85.5a3 3 0 1 0 3.5-.5" stroke="#fff" stroke-width="1.5" fill="none"/><path d="M189 83l2.5 1.8-2.5 1.8z" fill="#fff"/>
<!-- simplify -->
<circle cx="216.5" cy="77" r="7" fill="#8dbf8a" stroke="#555" stroke-width="0.9"/>
<path d="M219.5 78.3h8.5l4 7.2-4 7.2h-8.5l-4-7.2z" fill="#b4cce6" stroke="#5a86b8" stroke-width="0.9"/>
<path d="M217 78.5l6 6.5" stroke="#333" stroke-width="1"/><path d="M224.5 86.5l-3.5-.5 2.8-2.8z" fill="#333"/>
<!-- add ring faded -->
<use href="#blob" x="247.5" y="70.3" fill="#c4dbc2" opacity="0.8"/><ellipse cx="253.5" cy="75.5" rx="4" ry="2.6" fill="#eee" stroke="#bbb" stroke-width="0.8"/>
<use href="#byf" x="259" y="82"/>
<!-- add part -->
<use href="#blob" x="285.5" y="70.3" fill="#bbb"/>
<path d="M289 82c3-1.5 6-1 6.5 2s-1.5 6.5-4 7.5-5.5 0-6-1.5c0-3 1.5-6.5 3.5-8z" fill="#8dbf8a" stroke="#555" stroke-width="0.9"/>
<use href="#by" x="297" y="82"/>
<!-- fill ring faded -->
<g opacity="0.6"><use href="#blob" x="323.5" y="70.3" fill="#d9d9d9"/></g><ellipse cx="329.5" cy="75.5" rx="4" ry="2.8" fill="#b8d8b4" opacity="0.8"/>
<use href="#byf" x="335.2" y="82"/>
<!-- delete ring faded -->
<use href="#blob" x="361.5" y="70.3" fill="#c4dbc2" opacity="0.8"/><ellipse cx="367.5" cy="75.5" rx="4" ry="2.6" fill="#eee" stroke="#bbb" stroke-width="0.8"/>
<rect x="374" y="83.5" width="10" height="9.5" rx="1.5" fill="#e6a0a0"/><path d="M376.5 86l5 4.5M381.5 86l-5 4.5" stroke="#fff" stroke-width="1.6"/>
<!-- delete part -->
<use href="#blob" x="399.5" y="70.3" fill="#bbb"/>
<path d="M403 82c3-1.5 6-1 6.5 2s-1.5 6.5-4 7.5-5.5 0-6-1.5c0-3 1.5-6.5 3.5-8z" fill="#8dbf8a" stroke="#555" stroke-width="0.9"/>
<rect x="412" y="83" width="10.2" height="10" rx="1.5" fill="#d94848"/><path d="M414.5 85.5l5 5M419.5 85.5l-5 5" stroke="#fff" stroke-width="1.8"/>
<!-- pressed reshape -->
<rect x="431" y="65.7" width="33.7" height="11.3" fill="#cfcfcf"/><rect x="431" y="77" width="33.7" height="21" fill="#b9b9b9"/>
<rect x="431" y="65.7" width="1.2" height="32.3" fill="#9a9a9a"/><rect x="463.5" y="65.7" width="1.2" height="32.3" fill="#9a9a9a"/>
<path d="M438.5 75c0-3.5 2.5-5 6-5 3 0 5 1.5 8 1.5s5.5 1 5.5 4.5c0 3.5-2 5.5-5 5.5-2.5 0-3.5-.5-5-.5-1.5 0-2 1.5-2.5 4-.5 3-1.5 4.5-3 4.5s-2.5-2-2.5-4.5c0-2-.5-4.5-1.5-10z" fill="#8dbf8a" stroke="#555" stroke-width="1"/>
<path d="M438.8 79.5c1.5-.5 3 0 4-.5s2.5-.5 3.5.5c.5 2-.5 3.5-1 6-.5 2.5-1 4-2.3 4s-2.3-2-2.5-4.5c0-2-.3-3.5-1.7-5.5z" fill="#e6c02a" stroke="#555" stroke-width="0.6"/>
<!-- offset curve -->
<path d="M476 86.5c-1.5-3 0-5.5 3-7.5l8-6c3-2 6.5-2.5 8.5 0s1 6-2 8l-8 6.5c-3 2.5-8 2.5-9.5-1z" fill="#8dbf8a" stroke="#d6b400" stroke-width="2.6"/>
<path d="M476 86.5c-1.5-3 0-5.5 3-7.5l8-6c3-2 6.5-2.5 8.5 0s1 6-2 8l-8 6.5c-3 2.5-8 2.5-9.5-1z" fill="none" stroke="#777" stroke-width="0.6"/>
<!-- split features -->
<path d="M521 70.5c-5 0-7.5 2.5-7.5 5.5s2.5 5.5 7 5.5c2 0 3-1 3-2.5v-6.5c0-1-1-2-2.5-2z" fill="#b5b5b5" stroke="#555" stroke-width="0.9"/>
<path d="M528 71c4.5 0 7 2 7 5.2s-2.5 5.3-6 5.3c-2 0-2.5-1-2.5-2.5v-6c0-1 .5-2 1.5-2z" fill="#8dbf8a" stroke="#555" stroke-width="0.9"/>
<path d="M526 70.5l-3 14M524.5 70.5l3.5 14" stroke="#888" stroke-width="1.6"/><path d="M526 70.5l-3 14M524.5 70.5l3.5 14" stroke="#f6f6f6" stroke-width="0.7"/>
<ellipse cx="521.6" cy="88.6" rx="1.7" ry="3.4" fill="none" stroke="#c01a1a" stroke-width="1.3" transform="rotate(28 521.6 88.6)"/>
<ellipse cx="529.2" cy="87.6" rx="1.7" ry="3.4" fill="none" stroke="#c01a1a" stroke-width="1.3" transform="rotate(-38 529.2 87.6)"/>
<!-- split parts faded -->
<path d="M559 70.5c-5 0-7.5 2.5-7.5 5.5s2.5 5.5 7 5.5c2 0 3-1 3-2.5v-6.5c0-1-1-2-2.5-2z" fill="#bed8bc" stroke="#bbb" stroke-width="0.9"/>
<path d="M566 71c4.5 0 7 2 7 5.2s-2.5 5.3-6 5.3c-2 0-2.5-1-2.5-2.5v-6c0-1 .5-2 1.5-2z" fill="#bed8bc" stroke="#bbb" stroke-width="0.9"/>
<path d="M564 70.5l-3 14M562.5 70.5l3.5 14" stroke="#c8c8c8" stroke-width="1.2"/><ellipse cx="559.6" cy="88.6" rx="1.7" ry="3.4" fill="none" stroke="#d88080" stroke-width="1.3" transform="rotate(28 559.6 88.6)"/>
<ellipse cx="567.2" cy="87.6" rx="1.7" ry="3.4" fill="none" stroke="#d88080" stroke-width="1.3" transform="rotate(-38 567.2 87.6)"/>
<!-- merge features -->
<path d="M596.5 70.8c-5 0-7.5 2.5-7.5 5.5s2.5 5.8 7 5.8c2 0 3-1 3-2.5v-6.5c0-1-1-2.3-2.5-2.3z" fill="#8dbf8a" stroke="#555" stroke-width="0.9"/>
<path d="M603.5 71c4.5 0 7 2 7 5.2s-2.5 5.5-6 5.5c-2 0-2.5-1-2.5-2.5v-6c0-1 .5-2.2 1.5-2.2z" fill="#8dbf8a" stroke="#555" stroke-width="0.9"/>
<rect x="598" y="74.5" width="5" height="3" fill="#f4f4f4" stroke="#444" stroke-width="0.7"/>
<path d="M594.5 82.5l8.5 8.5" stroke="#333" stroke-width="0.9"/>
<!-- merge attributes -->
<g fill="#fff" stroke="#555" stroke-width="0.8"><rect x="628.3" y="71.2" width="8.5" height="5"/><rect x="639.3" y="71.2" width="8.5" height="5"/><rect x="628.3" y="78.2" width="8.5" height="5"/><rect x="639.3" y="78.2" width="8.5" height="5"/><rect x="628.3" y="85.2" width="8.5" height="5"/><rect x="639.3" y="85.2" width="8.5" height="5"/></g>
<path d="M635 72.5c1.5-1 3-1 4.5 0M635 79.5c1.5-1 3-1 4.5 0M635 86.5c1.5-1 3-1 4.5 0" stroke="#222" stroke-width="0.8" fill="none"/>
<!-- rotate point symbols -->
<path d="M687.5 71l5 8.8h-10z" fill="#b5d6b2" stroke="#9abf96" stroke-width="0.6"/>
<path d="M673 91.3h6M679 91.3l10-9" stroke="#666" stroke-width="0.8" fill="none"/><path d="M690.5 81.5l-3.5.5 1.5 2.5z" fill="#666"/>
<use href="#dd" x="696.2" y="83"/>
</g>

<use href="#hh" x="7.5" y="104.5"/><use href="#hh" x="7.5" y="494"/>
<!-- new vector -->
<path d="M9.2 118.4L15.7 132.9L22.7 118.4H28.6" stroke="#2c4a72" stroke-width="1.5" fill="none"/>
<g fill="#fff" stroke="#2c4a72" stroke-width="1.2"><circle cx="9.2" cy="118.4" r="2"/><circle cx="15.7" cy="132.9" r="2"/><circle cx="22.7" cy="118.4" r="2"/><circle cx="28.6" cy="118.4" r="2"/></g>
<use href="#bg" x="21" y="130"/>
<!-- raster -->
<rect x="7" y="154" width="19" height="19.4" fill="#6a9ad0"/>
<g fill="#243a5a"><rect x="7" y="154" width="6.3" height="6.5"/><rect x="19.7" y="154" width="6.3" height="6.5"/><rect x="13.3" y="160.5" width="6.4" height="6.4"/><rect x="7" y="166.9" width="6.3" height="6.5"/></g>
<use href="#bg" x="21.5" y="168.5"/>
<!-- spatialite feather -->
<path d="M7.5 215.5C9 208 12 201 17 196.5S26 191.5 29.7 191.5C29 196 26.5 200.5 22 204.5S13 210 10 211.5z" fill="#7aa4d8" stroke="#2a4a80" stroke-width="1"/>
<path d="M10 211.5C15 205 21 198 28 193" stroke="#cfe0f4" stroke-width="0.9" fill="none"/>
<path d="M7.2 216l3.5-5" stroke="#2a4a80" stroke-width="1.3"/>
<use href="#bg" x="21.5" y="206"/>
<!-- postgis elephant -->
<path d="M15 231C17.5 229.3 20.5 229.5 22.5 230.8C24.5 229.4 28.5 229.4 30.8 231.2C32.3 233.5 31.8 238.5 30.2 241.2C29.2 242.6 27.8 242.6 26.8 241.2L26.3 246.2C26.2 248.2 24.6 248.7 23.2 248.2C21.8 247.7 21.2 246.3 21.2 244.8V240.5C19.2 242.3 16.2 242.2 14.6 239.6C13 237 13 233 15 231Z" fill="#6d9bd4" stroke="#2a4a80" stroke-width="1"/>
<path d="M19 232.5c-1 2-1 5 1 7M23.5 233c1.5 2 2 5 2.3 8.5M27.5 233c1.5 1.5 2 4 1.5 6.5" stroke="#2a4a80" stroke-width="0.8" fill="none"/>
<use href="#bg" x="27.5" y="244.5"/><use href="#dd" x="39" y="244"/>
<!-- WMS globe -->
<ellipse cx="24.8" cy="278.4" rx="11.5" ry="10.2" fill="#b4cdee" stroke="#6f9ad4" stroke-width="1"/>
<path d="M13.5 278.4h22.5M15.5 273h18.5M15.5 283.8h18.5M24.8 268.2v20.4" stroke="#e4eefa" stroke-width="0.8"/>
<g fill="#2a4a78" opacity="0.85"><path d="M16 272l3-1.5 2 1.5-1 3-3 .5z"/><path d="M22 271l4 0 1 2-2 2-3-1z"/><path d="M28 271l3 1 .5 3-2.5 .5z"/><path d="M19 278l2 1 0 3-2 1-1-2z"/><path d="M24.5 277l2.5 1-.5 4-2 2-1-3z"/><path d="M30 276l2 1-1 3z"/></g>
<use href="#bg" x="28" y="283"/><use href="#dd" x="39" y="282"/>
<!-- WCS globe -->
<ellipse cx="18.9" cy="316.2" rx="11.5" ry="10.2" fill="#284a78" stroke="#1e3a60" stroke-width="1"/>
<ellipse cx="18.9" cy="316.2" rx="5" ry="10" fill="#7aa6dc"/>
<path d="M9 312.5h19.8M8 319.5h21.8" stroke="#fff" stroke-width="1.1"/>
<path d="M18.9 306v20.4" stroke="#fff" stroke-width="0.8"/>
<ellipse cx="18.9" cy="316.2" rx="5" ry="10" fill="none" stroke="#fff" stroke-width="0.7"/>
<use href="#bg" x="22" y="321"/>
<!-- WFS globe -->
<ellipse cx="24.8" cy="354" rx="11.5" ry="10.2" fill="#dfe9f6" stroke="#5a8ad8" stroke-width="1"/>
<path d="M13.5 354h22.5M15.5 348.5h18.5M15.5 359.5h18.5M24.8 343.8v20.4" stroke="#7aa2e0" stroke-width="0.7"/>
<ellipse cx="24.8" cy="354" rx="5" ry="10" fill="none" stroke="#7aa2e0" stroke-width="0.7"/>
<path d="M18.5 349L22.5 360L27.5 349H31.5" stroke="#1a2a40" stroke-width="1.3" fill="none"/>
<g fill="#fff" stroke="#1a2a40" stroke-width="1"><circle cx="18.5" cy="349" r="1.5"/><circle cx="22.5" cy="360" r="1.5"/><circle cx="27.5" cy="349" r="1.5"/><circle cx="31.5" cy="349" r="1.5"/></g>
<use href="#bg" x="28" y="359"/><use href="#dd" x="39" y="358.2"/>
<!-- delimited text comma -->
<path d="M16 384.5c3.5 0 6 2 6 5 0 3.5-3 7.5-9.5 11.5l-1-1.2c3-2.5 5-4.5 5.5-6.5-3 .5-5.5-1-5.5-4s2-4.8 4.5-4.8z" fill="#5f8cc8" stroke="#3a62a0" stroke-width="0.8"/>
<use href="#bg" x="22" y="397"/>
<!-- virtual layer -->
<rect x="8.5" y="421.5" width="21" height="21" rx="2.5" fill="#bcd0ea" stroke="#5c7cab" stroke-width="1"/>
<path d="M10.3 423l5.7 13.5 5.8-13.5h6.5" stroke="#2c4a72" stroke-width="1.2" fill="none"/>
<g fill="#d8e4f4" stroke="#2c4a72" stroke-width="1"><circle cx="16" cy="436.5" r="1.7"/><circle cx="21.8" cy="423" r="1.4"/><circle cx="10.3" cy="423" r="1.3"/></g>
<use href="#bg" x="21.2" y="434"/>
<!-- chip -->
<path d="M19.5 460.7v3.3M22.5 460.7v3.3M25.5 460.7v3.3M28.5 460.7v3.3M31.5 460.7v3.3M19.5 475v3.5M22.5 475v3.5M25.5 475v3.5" stroke="#2a4a80" stroke-width="1"/>
<rect x="16.5" y="464" width="18.7" height="11" rx="1.5" fill="#6b9bd8" stroke="#2a4a80" stroke-width="1"/>
<rect x="28.2" y="472.8" width="9" height="9" rx="1.5" fill="#d2aa00"/><path d="M32.7 474.2v6.2M29.8 475.8l5.8 3M29.8 478.8l5.8-3" stroke="#fff" stroke-width="1.1"/>
<use href="#dd" x="39.2" y="472.2"/>

<!-- panel title -->
<circle cx="59" cy="110.6" r="6.9" fill="#4b4b4b"/><path d="M56.6 108.2l4.8 4.8M61.4 108.2l-4.8 4.8" stroke="#fff" stroke-width="1.9"/>
<circle cx="79" cy="110.6" r="6.9" fill="#4b4b4b"/><rect x="77.5" y="107.5" width="5" height="3.8" rx="0.8" fill="none" stroke="#fff" stroke-width="1"/><rect x="75.3" y="109.5" width="5" height="4" rx="0.8" fill="#4b4b4b" stroke="#fff" stroke-width="1"/>
<text x="166.3" y="115.1" font-family="Liberation Sans" font-size="11" fill="#000">Layers Panel</text>
<!-- panel toolbar -->
<path d="M56.5 135.5v11h10" fill="none" stroke="#777" stroke-width="0.9"/>
<rect x="58.5" y="133.5" width="8.5" height="10.5" fill="#eee" stroke="#777" stroke-width="0.9"/><rect x="61" y="131.5" width="8.5" height="10.5" fill="#f2f2f2" stroke="#777" stroke-width="0.9"/>
<path d="M63 140.5v-7a1.5 1.5 0 0 1 3 0v6" stroke="#2f5fa8" stroke-width="1" fill="none"/>
<rect x="64" y="140.5" width="6.3" height="6.3" rx="1" fill="#5b9d5b"/><path d="M67.2 141.8v3.8M65.3 143.7h3.8" stroke="#fff" stroke-width="1.3"/>
<path d="M86.5 140q7.5-8 15 0q-7.5 6.5-15 0z" fill="#f2f2f2" stroke="#888" stroke-width="0.8"/><circle cx="93.5" cy="139.5" r="3.6" fill="#5b8cd0"/><circle cx="93.5" cy="139.5" r="1.3" fill="#111"/>
<path d="M97.5 142h6l-3 4.5z" fill="#000"/>
<path d="M116.5 131.8h13.5v2.2l-5 5.5v7.2l-3.5-1.5v-5.7l-5-5.5z" fill="#6c9ad2" stroke="#4a78b8" stroke-width="0.7"/><rect x="116.5" y="131.8" width="13.5" height="2" fill="#f5e000"/>
<path d="M159.8 133.3C157.5 131.5 153.5 131.8 153.5 134.3C153.5 135.8 155 136.8 157 136.8C154.5 136.8 153 137.8 153 139.3C153 141.8 157.5 142.2 160.2 140.5" fill="none" stroke="#6a2a8a" stroke-width="1.5"/>
<path d="M160.5 139h7.5v1.2l-2.5 3v3.5l-2.5-1v-2.5l-2.5-3z" fill="#d6d6d6" stroke="#999" stroke-width="0.6"/>
<use href="#dd" x="169" y="140.2"/>
<!-- expand / collapse -->
<path d="M189.5 133.5v12M189.5 133.5h12M189.5 139h4M189.5 145h4" stroke="#aaa" stroke-width="0.8" fill="none"/>
<rect x="192.5" y="137" width="3" height="3" fill="#f59a00"/><rect x="192.5" y="143" width="3" height="3" fill="#f59a00"/>
<path d="M196.5 132h4v8h2.8l-4.8 5.8-4.8-5.8h2.8z" fill="#6c9ad2" stroke="#3a64a0" stroke-width="0.7"/>
<path d="M219.5 133.5v12M219.5 133.5h12M219.5 139h4M219.5 145h4" stroke="#aaa" stroke-width="0.8" fill="none"/>
<rect x="222.5" y="137" width="3" height="3" fill="#f59a00"/><rect x="222.5" y="143" width="3" height="3" fill="#f59a00"/>
<path d="M226.5 145.5h4v-8h2.8l-4.8-5.8-4.8 5.8h2.8z" fill="#6c9ad2" stroke="#3a64a0" stroke-width="0.7"/>
<!-- remove -->
<rect x="248.6" y="132.6" width="10.8" height="11" fill="#ececec" stroke="#8a8a8a" stroke-width="0.9"/>
<rect x="256" y="141.4" width="6" height="4.4" rx="0.8" fill="#e23c3c"/><rect x="257.3" y="143.1" width="3.4" height="1" fill="#fff"/>
<!-- style brush -->
<path d="M289 141l4.5-4.5 5 3-4 4z" fill="#f3dd20"/><path d="M288 142l4.5-3.5 4.5 3.5-3.5 3.5z" fill="#4a7ac8"/><path d="M288 142.5l3-2 4 3.5-2 2z" fill="#e84040"/>
<path d="M292 140l5-2.5 3 3-2.5 5z" fill="#c8a870"/><path d="M297 139l5-5.5" stroke="#c89a40" stroke-width="1.8"/>
<!-- layer row -->
<rect x="77" y="157" width="14" height="14" rx="3" fill="#3b97f8"/><path d="M80.3 164.2l2.6 3 4.8-6.5" stroke="#fff" stroke-width="1.5" fill="none"/>
<g transform="translate(108.3,168.3) rotate(-54)"><rect x="0" y="-1.8" width="12.5" height="3.6" fill="#d08c48" stroke="#a86a30" stroke-width="0.5"/><path d="M0 -1.8l-2.8 1.8 2.8 1.8z" fill="#f0f0f0" stroke="#aaa" stroke-width="0.4"/><rect x="12.5" y="-1.8" width="2" height="3.6" fill="#fff"/></g>
<path d="M104.5 164.3h15.5" stroke="#fff" stroke-width="0.9" opacity="0.8"/>
<text x="126" y="167.9" font-family="Liberation Sans" font-weight="bold" font-size="13" fill="#fff">Lines</text>
<rect x="126" y="169.2" width="33.5" height="1" fill="#fff"/>
<!-- tabs -->
<path d="M53 686.3h22M284.2 686.3h21" stroke="#c4c4c4" stroke-width="1"/>
<path d="M174.8 677.3h102.4a4 4 0 0 1 4 4v11.5a4 4 0 0 1-4 4h-102.4z" fill="#fff" stroke="#cfcfcf" stroke-width="0.8"/>
<defs><linearGradient id="gb" x1="0" y1="0" x2="0" y2="1"><stop offset="0" stop-color="#6ab0f9"/><stop offset="0.5" stop-color="#4a9cf7"/><stop offset="0.52" stop-color="#2a88f5"/><stop offset="1" stop-color="#1a7ef3"/></linearGradient></defs>
<path d="M81.1 677.2h93.7v19.6h-93.7a4 4 0 0 1-4-4v-11.6a4 4 0 0 1 4-4z" fill="url(#gb)"/>
<text x="87.1" y="690.6" font-family="Liberation Sans" font-size="13" fill="#fff">Layers Panel</text>
<text x="186.6" y="691" font-family="Liberation Sans" font-size="13" fill="#000">Browser Panel</text>

<g font-family="Liberation Sans" font-size="13" fill="#000">
<text x="259.1" y="722">Coordinate</text>
<rect x="326.5" y="708.5" width="126" height="20" fill="#fff" stroke="#a9a9a9" stroke-width="1"/>
<text x="346" y="722">106.035,-6.233</text>
<rect x="453.5" y="706.5" width="25.5" height="25" fill="#fff" stroke="#a9a9a9" stroke-width="1"/><rect x="454" y="707" width="24.5" height="12" fill="#e8e8e8"/>
<g transform="translate(466,719) rotate(-35)"><rect x="-4.6" y="-7.6" width="9.2" height="14.5" rx="4.6" fill="#f4f4f4" stroke="#111" stroke-width="1.8"/><path d="M-4.6 -0.8h9.2M-1 -7.5v6.5M1.2 -7.5v6.5" stroke="#111" stroke-width="1.4"/><circle cx="0" cy="3.3" r="1.3" fill="none" stroke="#111" stroke-width="1"/></g>
<path d="M471.5 712l2.5-1.5M459 722.5l-1.5 1" stroke="#333" stroke-width="0.8"/>
<text x="488" y="722">Scale</text>
<rect x="524.5" y="706.5" width="102" height="20" fill="#fff" stroke="#b5b5b5" stroke-width="1"/>
<path d="M623.9 706h13.9a4 4 0 0 1 4 4v12.8a4 4 0 0 1-4 4h-13.9z" fill="url(#gb)"/>
<path d="M630 715.5l3 3 3-3" stroke="#fff" stroke-width="1.3" fill="none"/>
<text x="527.6" y="722">1:320 608</text>
<rect x="642.5" y="705.5" width="25" height="25" fill="#fff" stroke="#a9a9a9" stroke-width="1"/><rect x="643" y="706" width="24" height="12" fill="#e8e8e8"/>
<path d="M651 718v-3.5a4 4 0 0 1 8 0v3.5" fill="none" stroke="#9a9a9a" stroke-width="1.4"/>
<rect x="649" y="717.8" width="12.2" height="7.2" rx="1.5" fill="#f7c300" stroke="#d4a200" stroke-width="0.6"/>
<text x="677.4" y="722">Magnifier</text>
<rect x="735.5" y="708.5" width="91" height="20" fill="#fff" stroke="#a9a9a9" stroke-width="1"/><rect x="782.9" y="710" width="42.1" height="16.8" fill="#e8e8e8"/>
<text x="738.6" y="722">100%</text>
<rect x="830.5" y="708.6" width="12" height="20.7" rx="6" fill="#fff" stroke="#c9c9c9" stroke-width="0.8"/>
<path d="M834 716.5l2.5-2.5 2.5 2.5M834 721.5l2.5 2.5 2.5-2.5" stroke="#444" stroke-width="1.1" fill="none"/>
<text x="853" y="722">Rotation</text>
<rect x="912.5" y="708.5" width="87" height="20" fill="#fff" stroke="#a9a9a9" stroke-width="1"/><rect x="956" y="710" width="42" height="16.8" fill="#e8e8e8"/>
<text x="915.2" y="722">0,0</text>
<rect x="1003.3" y="708.6" width="12" height="20.7" rx="6" fill="#fff" stroke="#c9c9c9" stroke-width="0.8"/>
<path d="M1006.8 716.5l2.5-2.5 2.5 2.5M1006.8 721.5l2.5 2.5 2.5-2.5" stroke="#444" stroke-width="1.1" fill="none"/>
<rect x="1023" y="712.2" width="14" height="13.7" rx="3" fill="#3b97f8"/><path d="M1026.3 719.3l2.6 3 4.8-6.3" stroke="#fff" stroke-width="1.5" fill="none"/>
<text x="1041.4" y="722">Render</text>
<rect x="1086.5" y="710.5" width="106" height="17" fill="#fff" stroke="#a9a9a9" stroke-width="1"/><rect x="1087" y="711" width="105" height="8" fill="#e8e8e8"/>
<circle cx="1099" cy="718.9" r="7" fill="#bdbdbd" stroke="#777" stroke-width="1"/><circle cx="1099" cy="718.9" r="4.5" fill="none" stroke="#666" stroke-width="0.8"/><path d="M1092 718.9h14M1099 712v14" stroke="#666" stroke-width="0.8"/><rect x="1096.5" y="716.4" width="5" height="5" fill="#e0e0e0" stroke="#666" stroke-width="0.6"/>
<text x="1111.4" y="722">EPSG:4326</text>
<rect x="1199.5" y="710.5" width="37" height="17" fill="#fff" stroke="#a9a9a9" stroke-width="1"/><rect x="1200" y="711" width="36" height="8" fill="#e8e8e8"/>
<ellipse cx="1212" cy="718.3" rx="8" ry="6.4" fill="#6f6f6f"/><path d="M1214 723l4 3.5-1-4.5z" fill="#6f6f6f"/>
<g fill="#fff"><circle cx="1208.5" cy="718.3" r="1.1"/><circle cx="1212" cy="718.3" r="1.1"/><circle cx="1215.5" cy="718.3" r="1.1"/></g>
<path d="M1249 741l12-12M1253 741l8-8M1257 741l4-4" stroke="#a0a0a0" stroke-width="0.9"/>
</g>

<clipPath id="cm"><rect x="311" y="99" width="950" height="597"/></clipPath>
<g clip-path="url(#cm)">
<path d="M531.9 163.4A179 179 0 0 1 817.8 315.4L816.4 316.2A109.4 109.4 0 0 0 905.8 488L920.6 488.3L920.6 490.6A108.3 108.3 0 0 1 735.7 567.2" fill="none" stroke="#e6d2da" stroke-width="2.2"/>
<path d="M531.9 163.4A179 179 0 0 1 817.8 315.4L816.4 316.2A109.4 109.4 0 0 0 905.8 488L920.6 488.3L920.6 490.6A108.3 108.3 0 0 1 735.7 567.2" fill="none" stroke="#a65a86" stroke-width="1.5" stroke-dasharray="1.7 2.4"/>
<path d="M453.4 224.4L630.3 301.7L654.9 268.9L755.8 345.8L697.7 466L794.7 522.8" fill="none" stroke="#fff200" stroke-width="2.6" stroke-linejoin="miter"/>
<g stroke="#ff5a3a" stroke-width="1.1" opacity="0.9">
<path d="M626.3 297.7l8 8M634.3 297.7l-8 8"/>
<path d="M650.9 264.9l8 8M658.9 264.9l-8 8"/>
<path d="M751.8 341.8l8 8M759.8 341.8l-8 8"/>
<path d="M693.7 462l8 8M701.7 462l-8 8"/>
<path d="M790.7 518.8l8 8M798.7 518.8l-8 8"/>
</g>
<!-- cursor -->
<circle cx="453.4" cy="224.4" r="5" fill="#ff00ff"/>
<path d="M453.4 224.4h5a5 5 0 0 1-5 5z" fill="#fff"/>
<path d="M453.4 224.4v5a5 5 0 0 1-4-2z" fill="#ff50ff"/>
<path d="M454 224.6l4.6 0.3-1 2.5z" fill="#f4ec40"/>
<polygon points="458.30,226.43 455.43,229.30 451.37,229.30 448.50,226.43 448.50,222.37 451.37,219.50 455.43,219.50 458.30,222.37" fill="none" stroke="#000" stroke-width="1.1"/>
<path d="M446.4 224.4h14M453.4 217.2v14.2" stroke="#000" stroke-width="1.05"/>
<circle cx="450.6" cy="217.8" r="0.9" fill="#ff40ff"/><circle cx="446.8" cy="221.2" r="0.9" fill="#ff40ff"/><circle cx="448" cy="219.8" r="0.7" fill="#f0a080"/>
</g>

</svg>
</body></html>
